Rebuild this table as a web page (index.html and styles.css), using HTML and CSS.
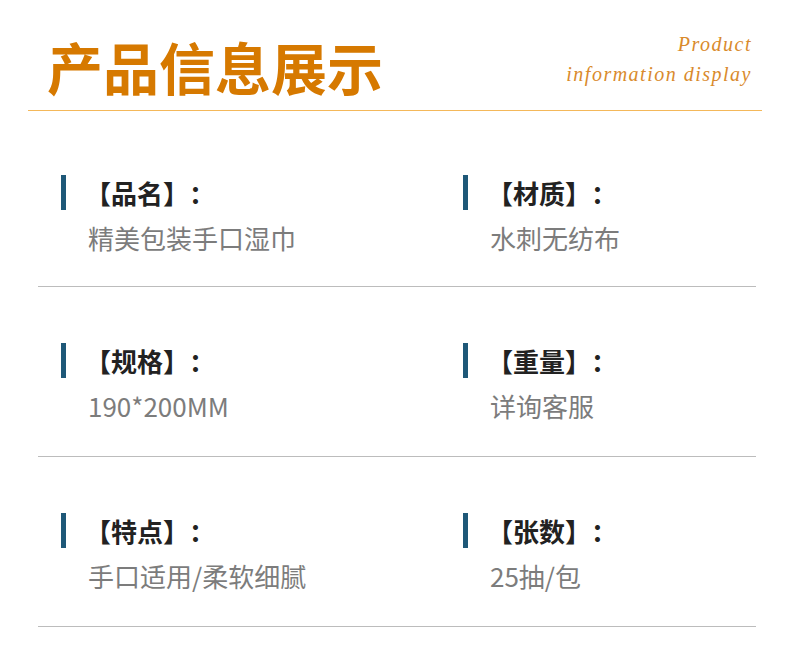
FILE: index.html
```html
<!DOCTYPE html>
<html lang="zh-CN">
<head>
<meta charset="utf-8">
<title>产品信息展示</title>
<link rel="stylesheet" href="styles.css">
</head>
<body>
<header class="header">
  <h1 class="title">产品信息展示</h1>
  <div class="subtitle">
    <div class="sub-line">Product</div>
    <div class="sub-line">information display</div>
  </div>
</header>
<main class="specs">
  <div class="row first">
    <div class="item">
      <div class="item-head"><span class="bar"></span><span class="label">【品名】：</span></div>
      <div class="value">精美包装手口湿巾</div>
    </div>
    <div class="item">
      <div class="item-head"><span class="bar"></span><span class="label">【材质】：</span></div>
      <div class="value">水刺无纺布</div>
    </div>
  </div>
  <div class="row">
    <div class="item">
      <div class="item-head"><span class="bar"></span><span class="label">【规格】：</span></div>
      <div class="value">190*200MM</div>
    </div>
    <div class="item">
      <div class="item-head"><span class="bar"></span><span class="label">【重量】：</span></div>
      <div class="value">详询客服</div>
    </div>
  </div>
  <div class="row">
    <div class="item">
      <div class="item-head"><span class="bar"></span><span class="label">【特点】：</span></div>
      <div class="value">手口适用/柔软细腻</div>
    </div>
    <div class="item">
      <div class="item-head"><span class="bar"></span><span class="label">【张数】：</span></div>
      <div class="value">25抽/包</div>
    </div>
  </div>
</main>
</body>
</html>
```
FILE: styles.css
```css
* { box-sizing: content-box; }
html, body {
  margin: 0;
  padding: 0;
  background: #ffffff;
  font-family: "Noto Sans CJK SC", "Noto Sans", sans-serif;
}
.header {
  margin: 0 28px;
  height: 110px;
  border-bottom: 1px solid #f4b85a;
  display: flex;
  justify-content: space-between;
  align-items: flex-start;
}
.title {
  margin: 38px 0 0 19px;
  font-size: 56px;
  line-height: 56px;
  font-weight: 700;
  color: #d67900;
}
.subtitle {
  margin: 29px 10px 0 0;
  text-align: right;
  font-family: "Liberation Serif", "DejaVu Serif", serif;
  font-style: italic;
  font-size: 20px;
  line-height: 30px;
  letter-spacing: 1.5px;
  color: #d98a2c;
}
.specs {
  margin: 0 34px 0 38px;
}
.row {
  display: grid;
  grid-template-columns: 402px 1fr;
  padding: 56px 0 33px 23px;
  border-bottom: 1px solid #bcbcbc;
}
.row.first {
  padding-top: 64px;
  padding-bottom: 31px;
}
.item-head {
  display: flex;
  align-items: center;
}
.bar {
  width: 5px;
  height: 35px;
  background: #1e5878;
}
.label {
  margin-left: 19px;
  font-size: 26px;
  line-height: 35px;
  font-weight: 700;
  color: #222222;
  text-spacing-trim: space-all;
}
.value {
  margin-top: 11px;
  padding-left: 27px;
  font-size: 26px;
  line-height: 34px;
  color: #7c7c7c;
}
```
